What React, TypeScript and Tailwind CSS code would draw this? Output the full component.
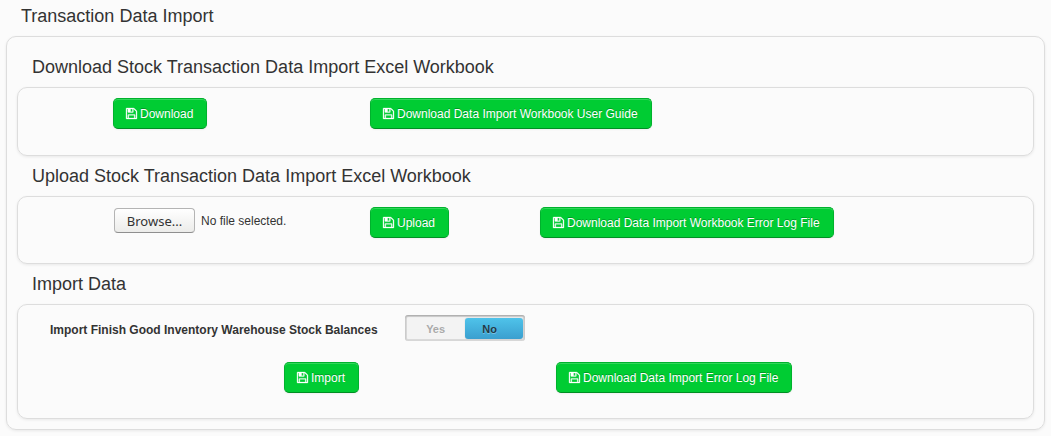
import { useState, type ReactNode } from "react";

function FloppyIcon() {
  return (
    <svg viewBox="0 128 1536 1536" className="h-[11px] w-[11px] shrink-0 overflow-visible fill-current stroke-current" strokeWidth="40" aria-hidden="true">
      <path d="M384 1536h768v-384h-768v384zM1280 1536h128v-896q0 -14 -10 -38.5t-20 -34.5l-281 -281q-10 -10 -34 -20t-39 -10v416q0 40 -28 68t-68 28h-576q-40 0 -68 -28t-28 -68v-416h-128v1280h128v-416q0 -40 28 -68t68 -28h832q40 0 68 28t28 68v416zM896 608v-320q0 -13 -9.5 -22.5t-22.5 -9.5h-192q-13 0 -22.5 9.5t-9.5 22.5v320q0 13 9.5 22.5t22.5 9.5h192q13 0 22.5 -9.5t9.5 -22.5zM1536 640v928q0 40 -28 68t-68 28h-1344q-40 0 -68 -28t-28 -68v-1344q0 -40 28 -68t68 -28h928q40 0 88 20t76 48l280 280q28 28 48 76t20 88z" />
    </svg>
  );
}

function ActionButton({ children }: { children: ReactNode }) {
  return (
    <button
      type="button"
      className="inline-flex h-[31px] w-fit items-center gap-[3px] whitespace-nowrap rounded-[5px] border border-[#00b22d] border-b-[#008f24] bg-[#00cc33] pl-3 pr-[13px] text-[12px] leading-4 text-white shadow-[inset_0_1px_0_rgba(255,255,255,0.2),0_1px_2px_rgba(0,0,0,0.05)] [text-shadow:0_-1px_0_rgba(0,0,0,0.25)]"
    >
      <FloppyIcon />
      {children}
    </button>
  );
}

function Section({ title, children }: { title: string; children: ReactNode }) {
  return (
    <section>
      <h2 className="flex h-10 items-center pl-[15px] text-[18px] leading-5">{title}</h2>
      <div className="rounded-[10px] border border-[#dddddd] shadow-[0_1px_3px_rgba(0,0,0,0.08)]">{children}</div>
    </section>
  );
}

function BalanceSwitch() {
  const [on, setOn] = useState(false);
  const active = "bg-linear-to-b from-[#4fc3ea] to-[#3a9fcf] text-[#1f3a47] rounded-[3px] shadow-[0_0_1px_rgba(0,0,0,0.3)]";
  const idle = "text-[#aaaaaa]";
  return (
    <button
      type="button"
      role="switch"
      aria-checked={on}
      aria-labelledby="balances-label"
      onClick={() => setOn(!on)}
      className="grid h-[26px] w-[120px] grid-cols-2 rounded-[3px] bg-[#f3f3f3] px-[2px] pb-[2px] pt-[3px] text-[11px] font-bold leading-4 shadow-[inset_0_1px_2px_rgba(0,0,0,0.25),inset_0_0_0_2px_rgba(0,0,0,0.1)] [text-shadow:0_1px_0_rgba(255,255,255,0.3)]"
    >
      <span className={`flex h-[21px] items-center justify-center ${on ? active : idle}`}>Yes</span>
      <span className={`flex h-[21px] items-center justify-center pr-2 ${on ? idle : active}`}>No</span>
    </button>
  );
}

export default function App() {
  const [fileName, setFileName] = useState("No file selected.");
  return (
    <main className="min-h-screen bg-[#fbfbfb] px-[6px] pb-[6px] font-['Liberation_Sans',Arial,sans-serif] text-[#333333]">
      <h1 className="flex h-9 items-center pb-1 pl-[15px] text-[18px] leading-5">Transaction Data Import</h1>
      <div className="rounded-[10px] border border-[#dddddd] p-[10px] shadow-[0_1px_3px_rgba(0,0,0,0.08)]">
        <Section title="Download Stock Transaction Data Import Excel Workbook">
          <div className="grid grid-cols-[257px_1fr] pb-[26px] pl-[95px] pt-[10px]">
            <ActionButton>Download</ActionButton>
            <ActionButton>Download Data Import Workbook User Guide</ActionButton>
          </div>
        </Section>
        <Section title="Upload Stock Transaction Data Import Excel Workbook">
          <div className="grid grid-cols-[257px_170px_1fr] pb-[25px] pl-[95px] pt-[10px]">
            <label className="flex h-[27px] w-fit cursor-pointer items-center gap-[6px] pl-px text-[12px] leading-4">
              <input
                type="file"
                className="sr-only"
                onChange={(e) => setFileName(e.target.files?.[0]?.name ?? "No file selected.")}
              />
              <span className="flex h-[25px] w-[81px] items-center justify-center rounded-[4px] border border-[#b4b4b4] border-b-[#8f8f8f] bg-linear-to-b from-white to-[#ececea] font-['Noto_Sans',sans-serif] text-[13px]">
                Browse...
              </span>
              <span>{fileName}</span>
            </label>
            <ActionButton>Upload</ActionButton>
            <ActionButton>Download Data Import Workbook Error Log File</ActionButton>
          </div>
        </Section>
        <Section title="Import Data">
          <div className="flex items-center gap-[27px] pl-8 pt-[10px]">
            <span id="balances-label" className="pt-1 text-[12px] font-bold leading-4">
              Import Finish Good Inventory Warehouse Stock Balances
            </span>
            <BalanceSwitch />
          </div>
          <div className="grid grid-cols-[272px_1fr] pb-[25px] pl-[266px] pt-[21px]">
            <ActionButton>Import</ActionButton>
            <ActionButton>Download Data Import Error Log File</ActionButton>
          </div>
        </Section>
      </div>
    </main>
  );
}
